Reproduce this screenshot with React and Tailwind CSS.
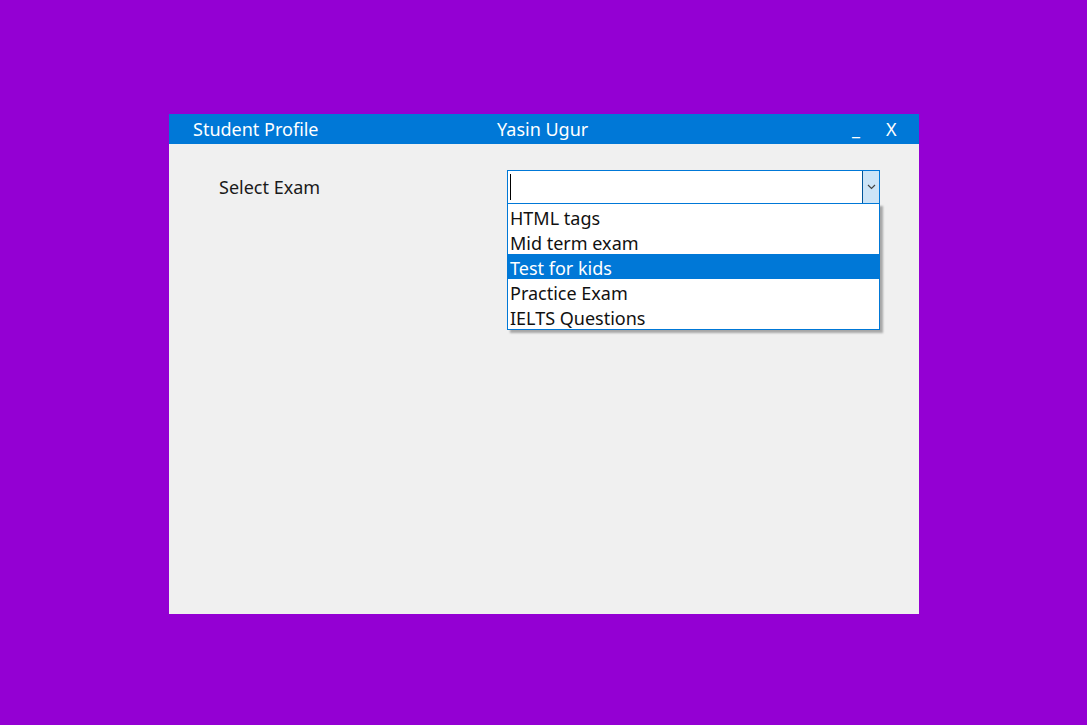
import React, { useState } from 'react';

const exams = ['HTML tags', 'Mid term exam', 'Test for kids', 'Practice Exam', 'IELTS Questions'];

const StudentProfile = () => {
  const [selected, setSelected] = useState(2);

  return (
    <div className="w-[750px] h-[500px] bg-[#f0f0f0] flex flex-col">
      {/* Title bar */}
      <div className="h-[30px] bg-[#0078d7] text-white flex items-center text-[18px] leading-none">
        <span className="pl-[24px] w-[328px]">Student Profile</span>
        <span className="flex-1">Yasin Ugur</span>
        <span className="w-[34px] pb-[2px]">_</span>
        <span className="w-[33px]">X</span>
      </div>

      <div className="flex pt-[26px]">
        <div className="w-[338px] pl-[50px] pt-[4px] text-[18px] text-[#1a1a1a]">Select Exam</div>
        <div className="relative w-[373px]">
          <div className="h-[34px] border border-[#0078d7] bg-white flex">
            <div className="flex-1 flex items-center pl-[2px]">
              <div className="w-px h-[26px] bg-black" />
            </div>
            <div className="w-[17px] h-full bg-[#cce4f7] border-l border-[#005499] flex items-center justify-center">
              <svg width="9" height="6" viewBox="0 0 9 6" fill="none">
                <path d="M1 1l3.5 3.5L8 1" stroke="#444" strokeWidth="1.2" />
              </svg>
            </div>
          </div>
          <ul className="absolute left-0 top-[33px] w-[373px] bg-white border border-[#0078d7] shadow-[3px_3px_2px_rgba(0,0,0,0.3)]">
            {exams.map((exam, i) => (
              <li
                key={exam}
                onMouseEnter={() => setSelected(i)}
                className={`h-[25px] pl-[2px] pt-[3px] flex items-center text-[18px] ${
                  i === selected ? 'bg-[#0078d7] text-white' : 'text-[#111]'
                }`}
              >
                {exam}
              </li>
            ))}
          </ul>
        </div>
      </div>
    </div>
  );
};

export default function App() {
  return (
    <div
      className="w-[1087px] h-[725px] bg-[#9400d3] flex items-start pl-[169px] pt-[114px]"
      style={{ fontFamily: '"Noto Sans", "DejaVu Sans", sans-serif' }}
    >
      <StudentProfile />
    </div>
  );
}
